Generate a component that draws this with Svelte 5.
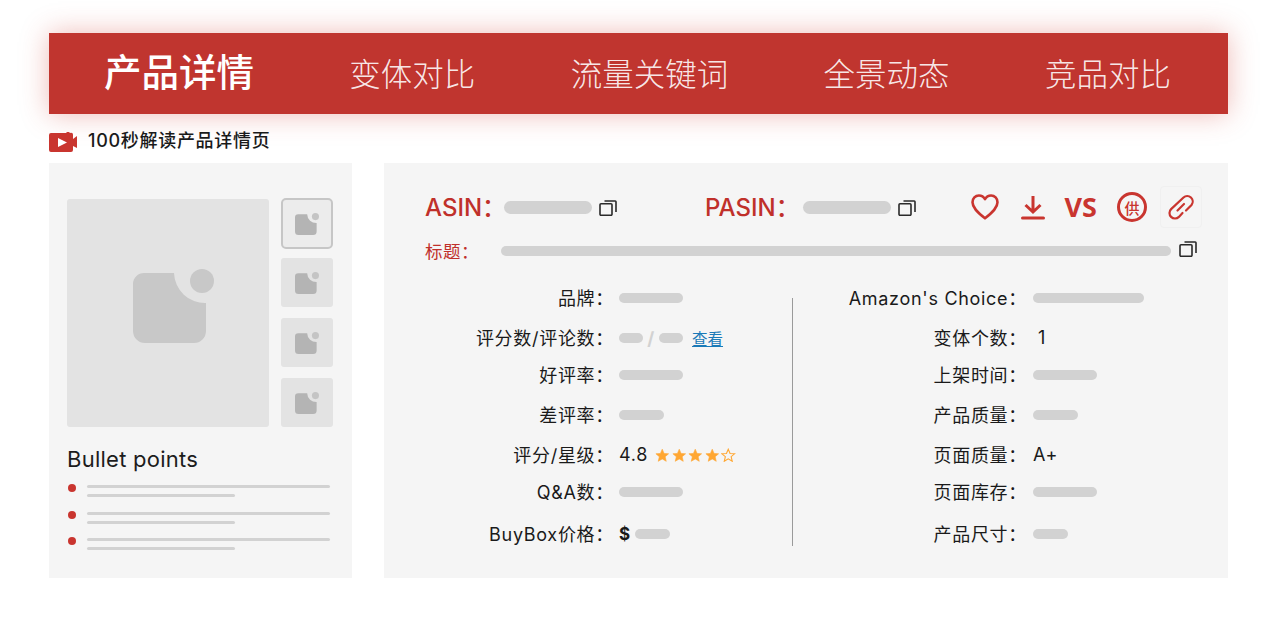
<script>
    const tabs = ["产品详情", "变体对比", "流量关键词", "全景动态", "竞品对比"];

    const leftRows = [
        { label: "品牌：", bar: 64 },
        { label: "评分数/评论数：", kind: "reviews" },
        { label: "好评率：", bar: 64 },
        { label: "差评率：", bar: 45 },
        { label: "评分/星级：", kind: "rating" },
        { label: "Q&A数：", bar: 64 },
        { label: "BuyBox价格：", kind: "price" },
    ];

    const rightRows = [
        { label: "Amazon's Choice：", bar: 111 },
        { label: "变体个数：", text: "1", indent: true },
        { label: "上架时间：", bar: 64 },
        { label: "产品质量：", bar: 45 },
        { label: "页面质量：", text: "A+" },
        { label: "页面库存：", bar: 64 },
        { label: "产品尺寸：", bar: 35 },
    ];

    const bullets = [1, 2, 3];
    const stars = [1, 2, 3, 4, 5];
</script>

{#snippet placeholder(cls)}
    <svg class={cls} viewBox="0 0 81 74">
        <path class="ph-body" d="M11 4H41A31 31 0 0 0 73 34V62A12 12 0 0 1 61 74H12A12 12 0 0 1 0 62V15A11 11 0 0 1 11 4Z" />
        <circle class="ph-dot" cx="69" cy="12" r="12" />
    </svg>
{/snippet}

{#snippet copyIcon()}
    <svg class="copy" viewBox="0 0 18 17" fill="none" stroke="#2a2a2a" stroke-width="1.6">
        <rect x="1" y="4.8" width="12" height="11.5" rx="1" />
        <path d="M5.5 2H16.2a.8.8 0 0 1 .8 .8V13" />
    </svg>
{/snippet}

{#snippet detailRow(row)}
    <div class="row">
        <span class="label">{row.label}</span>
        <div class="value">
            {#if row.kind === "reviews"}
                <span class="bar" style="width: 24px"></span>
                <span class="slash">/</span>
                <span class="bar" style="width: 24px"></span>
                <a class="look" href="#top">查看</a>
            {:else if row.kind === "rating"}
                <span class="num">4.8</span>
                <span class="stars">
                    {#each stars as s}
                        <svg viewBox="0 0 24 24" class="star">
                            <polygon
                                points="12,2 15,9 22.500,9.600 16.800,14.400 18.600,22 12,18 5.400,22 7.200,14.400 1.500,9.600 9,9"
                                fill={s < 5 ? "#ffa733" : "none"}
                                stroke="#ffa733"
                                stroke-width={s < 5 ? 1 : 1.8}
                            />
                        </svg>
                    {/each}
                </span>
            {:else if row.kind === "price"}
                <b class="dollar">$</b>
                <span class="bar" style="width: 35px"></span>
            {:else if row.text}
                <span class="num" class:indent={row.indent}>{row.text}</span>
            {:else}
                <span class="bar" style="width: {row.bar}px"></span>
            {/if}
        </div>
    </div>
{/snippet}

<div class="page">
    <nav class="tabs">
        {#each tabs as tab, i}
            <span class="tab" class:active={i === 0}>{tab}</span>
        {/each}
    </nav>

    <div class="video">
        <svg class="video-icon" viewBox="0 0 28 20">
            <path d="M2 1H17L18 0H20L21 1A2 2 0 0 1 24 3V7L28 4V16L24 14V18a2 2 0 0 1-2 2H2a2 2 0 0 1-2-2V3A2 2 0 0 1 2 1Z" fill="#c9352f" />
            <path d="M9 6L18 10.500L9 15Z" fill="#fff" />
        </svg>
        <span>100秒解读产品详情页</span>
    </div>

    <div class="panels">
        <section class="left">
            <div class="gallery">
                <div class="main-image">{@render placeholder("ph-main")}</div>
                <div class="thumbs">
                    <div class="thumb current">{@render placeholder("ph-thumb")}</div>
                    <div class="thumb">{@render placeholder("ph-thumb")}</div>
                    <div class="thumb">{@render placeholder("ph-thumb")}</div>
                    <div class="thumb">{@render placeholder("ph-thumb")}</div>
                </div>
            </div>
            <h3>Bullet points</h3>
            <ul>
                {#each bullets as b}
                    <li>
                        <i class="dot"></i>
                        <div class="lines">
                            <span class="line"></span>
                            <span class="line short"></span>
                        </div>
                    </li>
                {/each}
            </ul>
        </section>

        <section class="right">
            <div class="head">
                <div class="code asin">
                    <span class="code-name">ASIN：</span>
                    <span class="bar code-bar"></span>
                    {@render copyIcon()}
                </div>
                <div class="code">
                    <span class="code-name">PASIN：</span>
                    <span class="bar code-bar"></span>
                    {@render copyIcon()}
                </div>
                <div class="actions">
                    <svg class="heart" viewBox="0 0 28 26" fill="none" stroke="#c9352f" stroke-width="2.600">
                        <path d="M14 24.300C6 18 1.500 13.500 1.500 8.200C1.500 4.300 4.400 1.500 7.900 1.500C10.400 1.500 12.700 2.800 14 5.200C15.300 2.800 17.600 1.500 20.100 1.500C23.600 1.500 26.500 4.300 26.500 8.200C26.500 13.500 22 18 14 24.300Z" stroke-linejoin="round" />
                    </svg>
                    <svg class="download" viewBox="0 0 24 25" fill="none" stroke="#c9352f" stroke-width="3">
                        <path d="M12 1V17M4.500 10L12 17L19.500 10" />
                        <path d="M1.500 23H22.500" stroke-linecap="round" />
                    </svg>
                    <span class="vs">VS</span>
                    <span class="gong">供</span>
                    <span class="link-box">
                        <svg class="link" viewBox="0 0 26 26" fill="none" stroke="#c9352f" stroke-width="2.200" stroke-linecap="round">
                            <path d="M14.500 19L10.900 22.900A5.500 5.500 0 0 1 3.100 15.100L15.500 3.500A5.500 5.500 0 0 1 23.500 11L18 16.500" />
                            <path d="M9.500 16.500L16 10" />
                        </svg>
                    </span>
                </div>
            </div>

            <div class="title-row">
                <span class="title-name">标题：</span>
                <span class="bar title-bar"></span>
                {@render copyIcon()}
            </div>

            <div class="details">
                <div class="col col-left">
                    {#each leftRows as row}
                        {@render detailRow(row)}
                    {/each}
                </div>
                <div class="divider"></div>
                <div class="col col-right">
                    {#each rightRows as row}
                        {@render detailRow(row)}
                    {/each}
                </div>
            </div>
        </section>
    </div>
</div>

<style>
    :global(body) {
        background: #fff;
    }

    .page {
        width: 1179px;
        margin-left: 49px;
        padding-top: 33px;
        font-family: Inter, "Noto Sans CJK SC", sans-serif;
        color: #1a1a1a;
    }

    .tabs {
        display: flex;
        justify-content: space-between;
        align-items: center;
        height: 81px;
        padding: 0 57px 3px 55px;
        box-sizing: border-box;
        background: #c0352f;
        box-shadow: 0 0 26px rgba(205, 60, 50, 0.35);
    }

    .tab {
        font-size: 31.500px;
        font-weight: 300;
        color: rgba(255, 255, 255, 0.9);
    }

    .tab.active {
        margin-bottom: 5px;
        font-size: 37.500px;
        font-weight: 500;
        color: #fff;
    }

    .video {
        display: flex;
        align-items: center;
        gap: 11px;
        height: 49px;
        font-size: 18px;
        font-weight: 500;
        letter-spacing: 0.7px;
    }

    .video-icon {
        width: 28px;
        height: 20px;
        margin-top: 7px;
    }

    .panels {
        display: flex;
        gap: 32px;
    }

    .left {
        width: 303px;
        height: 415px;
        padding: 36px 0 0 18px;
        box-sizing: border-box;
        background: #f5f5f5;
    }

    .gallery {
        display: flex;
        gap: 12px;
    }

    .main-image {
        display: flex;
        align-items: center;
        justify-content: center;
        width: 202px;
        height: 228px;
        padding: 0 0 14px 11px;
        box-sizing: border-box;
        border-radius: 3px;
        background: #e3e3e3;
    }

    .ph-main {
        width: 81px;
        height: 74px;
    }

    .ph-main .ph-body,
    .ph-main .ph-dot {
        fill: #c8c8c8;
    }

    .thumbs {
        display: flex;
        flex-direction: column;
        gap: 11px;
        width: 52px;
        margin-top: -1px;
    }

    .thumb {
        display: flex;
        align-items: center;
        justify-content: center;
        height: 49px;
        border-radius: 3px;
        background: #e3e3e3;
    }

    .thumb.current {
        height: 51px;
        margin-bottom: -2px;
        box-sizing: border-box;
        border: 2px solid #c6c6c6;
        border-radius: 5px;
        background: #ececec;
    }

    .ph-thumb {
        width: 24px;
        height: 22px;
    }

    .ph-thumb .ph-body {
        fill: #b4b4b4;
    }

    .ph-thumb .ph-dot {
        fill: #c4c4c4;
    }

    h3 {
        margin: 20px 0 0;
        font-size: 22px;
        font-weight: 400;
        line-height: 24px;
        letter-spacing: 0.25px;
        color: #1c1c1c;
    }

    ul {
        margin: 13px 0 0;
        padding: 0;
        list-style: none;
    }

    li {
        display: flex;
        gap: 11px;
        height: 26.500px;
    }

    .dot {
        width: 8px;
        height: 8px;
        margin: 0 0 0 1px;
        border-radius: 50%;
        background: #c9352f;
    }

    .lines {
        display: flex;
        flex-direction: column;
        gap: 6px;
        padding-top: 1px;
    }

    .line {
        display: block;
        width: 243px;
        height: 3px;
        border-radius: 2px;
        background: #d2d2d2;
    }

    .line.short {
        width: 148px;
    }

    .right {
        width: 844px;
        height: 415px;
        padding: 23px 26px 0 41px;
        box-sizing: border-box;
        background: #f5f5f5;
    }

    .bar {
        display: inline-block;
        height: 10px;
        border-radius: 5px;
        background: #d2d2d2;
    }

    .head {
        display: flex;
        align-items: center;
        height: 42px;
    }

    .code {
        display: flex;
        align-items: center;
    }

    .code.asin {
        width: 280px;
    }

    .code-name {
        width: 79px;
        padding-bottom: 3px;
        font-size: 24px;
        font-weight: 500;
        letter-spacing: 0px;
        white-space: nowrap;
        color: #c0302a;
    }

    .code:not(.asin) .code-name {
        width: 98px;
    }

    .code-bar {
        width: 88px;
        height: 13px;
        border-radius: 7px;
    }

    .copy {
        width: 18px;
        height: 17px;
        margin-left: 7px;
    }

    .actions {
        display: flex;
        align-items: center;
        margin-left: auto;
    }

    .heart {
        width: 28px;
        height: 26px;
    }

    .download {
        width: 24px;
        height: 25px;
        margin-left: 22px;
    }

    .vs {
        margin-left: 20px;
        font-family: "Noto Sans", sans-serif;
        font-size: 27px;
        font-weight: 700;
        line-height: 30px;
        color: #c9352f;
    }

    .gong {
        display: flex;
        align-items: center;
        justify-content: center;
        width: 30px;
        height: 30px;
        margin-left: 20px;
        box-sizing: border-box;
        border: 3px solid #c9352f;
        border-radius: 50%;
        font-size: 15px;
        font-weight: 500;
        color: #c9352f;
    }

    .link-box {
        display: flex;
        align-items: center;
        justify-content: center;
        width: 42px;
        height: 42px;
        margin-left: 13px;
        border: 1px solid #f0f0f0;
        border-radius: 4px;
        box-sizing: border-box;
    }

    .link {
        width: 26px;
        height: 26px;
    }

    .title-row {
        display: flex;
        align-items: center;
        height: 34px;
        margin-top: 6px;
    }

    .title-name {
        width: 76px;
        padding-bottom: 2px;
        font-size: 17.500px;
        letter-spacing: 0.5px;
        color: #c0302a;
    }

    .title-bar {
        width: 670px;
    }

    .title-row .copy {
        margin-left: 8px;
        margin-top: -5px;
    }

    .details {
        display: flex;
        margin-top: 10px;
    }

    .col {
        display: grid;
        grid-template-rows: 40px 40px 34px 46px 34px 40px 44px;
    }

    .col-left {
        width: 367px;
    }

    .col-right {
        width: 370px;
    }

    .divider {
        width: 1px;
        height: 248px;
        margin-top: 20px;
        background: #9a9a9a;
    }

    .row {
        display: flex;
        align-items: center;
        font-size: 18px;
        letter-spacing: 0.7px;
    }

    .label {
        width: 189px;
        flex: none;
        padding-bottom: 2px;
        text-align: right;
    }

    .col-right .label {
        width: 234px;
    }

    .value {
        display: flex;
        align-items: center;
        margin-left: 5px;
    }

    .col-right .value {
        margin-left: 6px;
    }

    .slash {
        width: 16px;
        text-align: center;
        color: #d2d2d2;
        font-weight: 700;
    }

    .look {
        margin-left: 9px;
        font-size: 15.500px;
        letter-spacing: 0;
        color: #1a7ab8;
    }

    .num {
        padding-bottom: 2px;
        font-size: 18px;
    }

    .num.indent {
        margin-left: 5px;
    }

    .stars {
        display: flex;
        gap: 2px;
        margin-left: 7px;
    }

    .star {
        width: 14.500px;
        height: 14.500px;
    }

    .dollar {
        width: 16px;
        font-size: 17px;
    }
</style>
